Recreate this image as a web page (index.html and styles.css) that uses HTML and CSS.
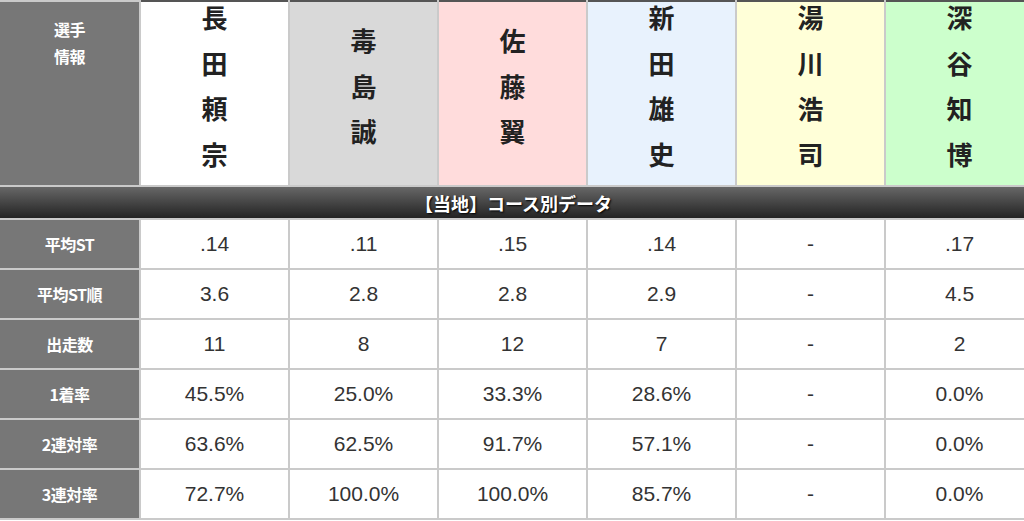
FILE: index.html
```html
<!DOCTYPE html>
<html lang="ja">
<head>
  <meta charset="UTF-8">
  <title>当地 コース別データ</title>
  <link rel="stylesheet" href="styles.css">
</head>
<body>
  <table class="race-table">
    <colgroup>
      <col class="col-label">
      <col class="col-player"><col class="col-player"><col class="col-player">
      <col class="col-player"><col class="col-player"><col class="col-player">
    </colgroup>
    <tr class="names">
      <th class="label label-top">選手<br>情報</th>
      <td class="name lane1"><span>長</span><span>田</span><span>頼</span><span>宗</span></td>
      <td class="name lane2"><span>毒</span><span>島</span><span>誠</span></td>
      <td class="name lane3"><span>佐</span><span>藤</span><span>翼</span></td>
      <td class="name lane4"><span>新</span><span>田</span><span>雄</span><span>史</span></td>
      <td class="name lane5"><span>湯</span><span>川</span><span>浩</span><span>司</span></td>
      <td class="name lane6"><span>深</span><span>谷</span><span>知</span><span>博</span></td>
    </tr>
    <tr>
      <th class="section" colspan="7">【当地】コース別データ</th>
    </tr>
    <tr>
      <th class="label">平均ST</th>
      <td>.14</td><td>.11</td><td>.15</td><td>.14</td><td>-</td><td>.17</td>
    </tr>
    <tr>
      <th class="label">平均ST順</th>
      <td>3.6</td><td>2.8</td><td>2.8</td><td>2.9</td><td>-</td><td>4.5</td>
    </tr>
    <tr>
      <th class="label">出走数</th>
      <td>11</td><td>8</td><td>12</td><td>7</td><td>-</td><td>2</td>
    </tr>
    <tr>
      <th class="label">1着率</th>
      <td>45.5%</td><td>25.0%</td><td>33.3%</td><td>28.6%</td><td>-</td><td>0.0%</td>
    </tr>
    <tr>
      <th class="label">2連対率</th>
      <td>63.6%</td><td>62.5%</td><td>91.7%</td><td>57.1%</td><td>-</td><td>0.0%</td>
    </tr>
    <tr>
      <th class="label">3連対率</th>
      <td>72.7%</td><td>100.0%</td><td>100.0%</td><td>85.7%</td><td>-</td><td>0.0%</td>
    </tr>
  </table>
</body>
</html>
```

FILE: styles.css
```css
html {
  overflow: hidden;
}
body {
  margin: 0;
  background: #fff;
  font-family: "Liberation Sans", Arial, "Noto Sans CJK JP", sans-serif;
}
.race-table {
  width: 1034px;
  table-layout: fixed;
  border-collapse: collapse;
  border-top: 2px solid #555;
}
.col-label {
  width: 140px;
}
.col-player {
  width: 149px;
}
.race-table th,
.race-table td {
  border: 2px solid #cacaca;
  padding: 0;
  text-align: center;
  vertical-align: middle;
}
.race-table td {
  height: 48px;
  font-size: 21px;
  color: #333;
  background: #fff;
}
.race-table th.label {
  background: #777;
  color: #fff;
  font-family: "Noto Sans CJK JP", sans-serif;
  font-weight: bold;
  font-size: 16px;
  letter-spacing: -0.5px;
  border-left: none;
}
.race-table th.label-top {
  vertical-align: top;
  padding-top: 14px;
  line-height: 27px;
}
.names td.name {
  height: 167px;
  padding-bottom: 16px;
  font-family: "Noto Sans CJK JP", sans-serif;
  font-weight: bold;
  font-size: 26px;
  line-height: 26px;
  color: #222;
  border-top: none;
}
.name span {
  display: block;
  margin-bottom: 19.5px;
}
.name span:last-child {
  margin-bottom: 0;
}
.lane1 { background: #fff; }
.lane2 { background: #d9d9d9 !important; }
.lane3 { background: #ffdcdc !important; }
.lane4 { background: #e8f2fd !important; }
.lane5 { background: #ffffd8 !important; }
.lane6 { background: #ccffcc !important; }
.race-table th.section {
  height: 31px;
  background: linear-gradient(#676767, #232323);
  color: #fff;
  font-family: "Noto Sans CJK JP", sans-serif;
  font-weight: bold;
  font-size: 18px;
  text-shadow: 1px 1px 2px #000;
  border-left: none;
  padding-right: 6px;
}
```
